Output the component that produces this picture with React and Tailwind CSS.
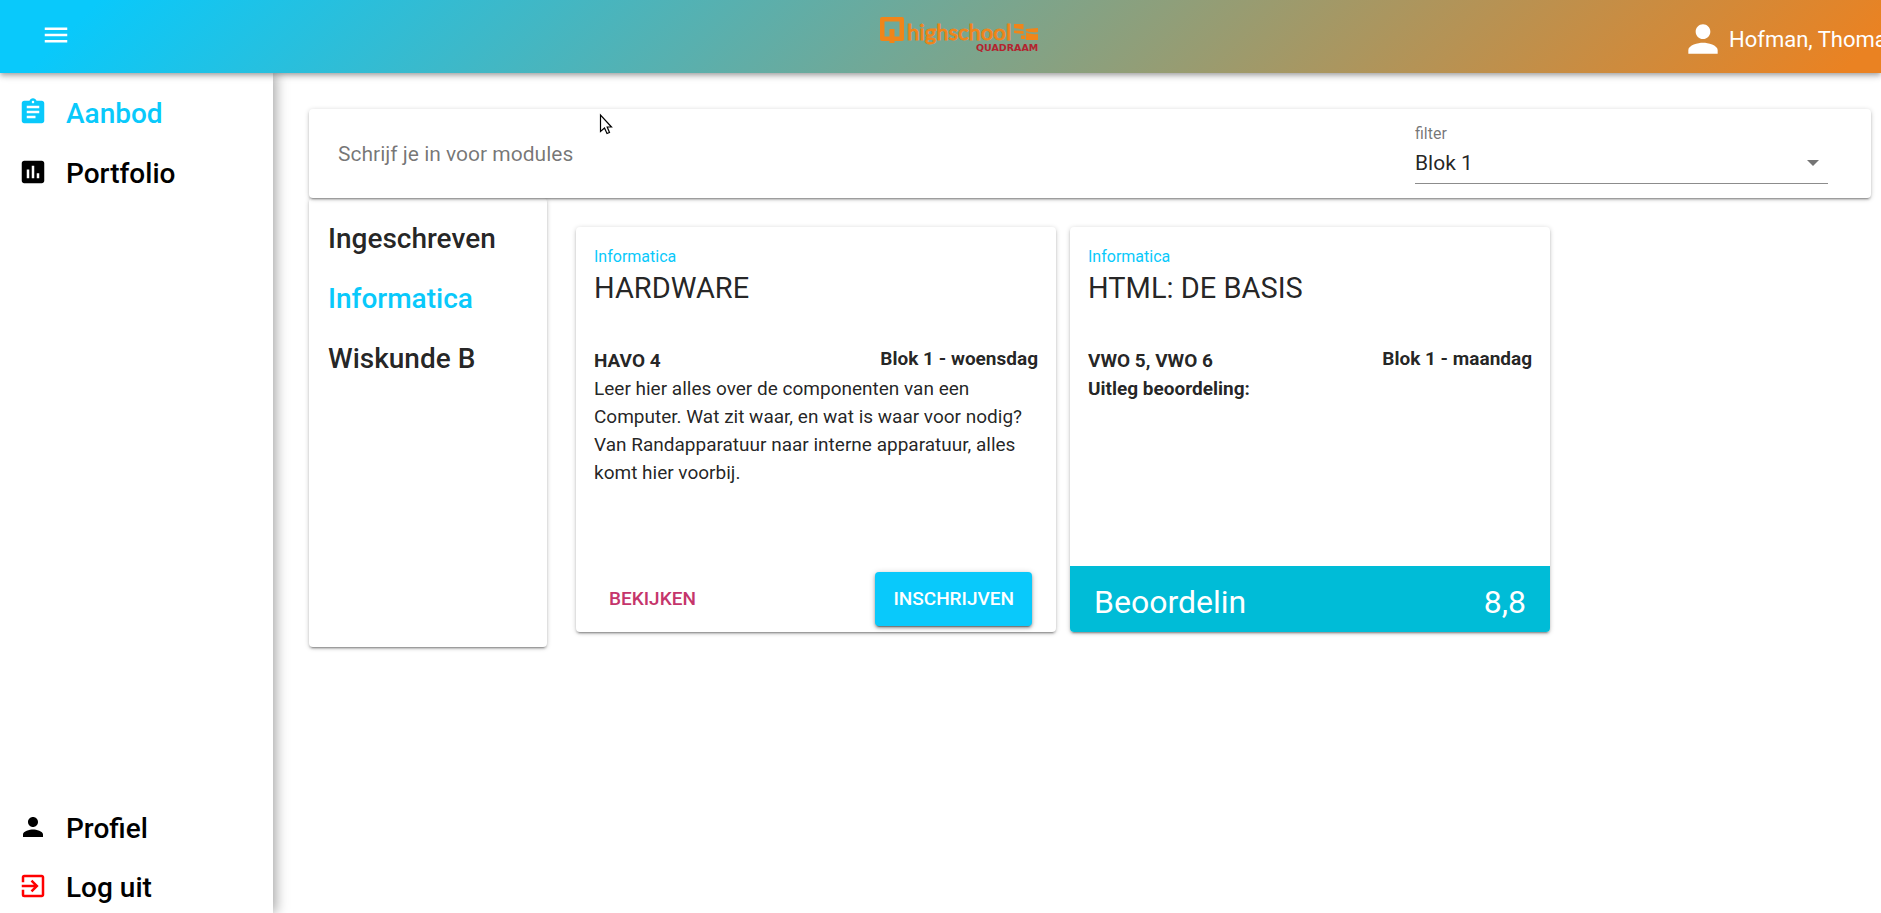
import { useState } from "react";
import {
  MdAssessment,
  MdAssignment,
  MdExitToApp,
  MdMenu,
  MdPerson,
} from "react-icons/md";

const cardShadow =
  "shadow-[0_3px_1px_-2px_rgba(0,0,0,0.2),0_2px_2px_rgba(0,0,0,0.16),0_1px_5px_rgba(0,0,0,0.2)]";
const raisedShadow =
  "shadow-[0_3px_1px_-2px_rgba(0,0,0,0.3),0_2px_3px_rgba(0,0,0,0.3),0_1px_6px_rgba(0,0,0,0.2)]";

const modules = [
  {
    title: "HARDWARE",
    subject: "Informatica",
    level: "HAVO 4",
    slot: "Blok 1 - woensdag",
    text: "Leer hier alles over de componenten van een Computer. Wat zit waar, en wat is waar voor nodig? Van Randapparatuur naar interne apparatuur, alles komt hier voorbij.",
  },
  {
    title: "HTML: DE BASIS",
    subject: "Informatica",
    level: "VWO 5, VWO 6",
    slot: "Blok 1 - maandag",
    grade: "8,8",
  },
];

function Logo() {
  return (
    <svg
      width="160"
      height="38"
      viewBox="0 0 160 38"
      role="img"
      aria-label="Qhighschool Quadraam"
    >
      <path
        fill="#f08519"
        fillRule="evenodd"
        d="M2 0H22Q24 0 24 2V22Q24 24 22 24H14.500V26H9.500V24H2Q0 24 0 22V2Q0 0 2 0ZM4.500 4.500V19.500H9.500V12H14.500V19.500H19.500V4.500Z"
      />
      <text
        x="27"
        y="23"
        fill="#f08519"
        stroke="#f08519"
        strokeWidth="0.8"
        fontFamily="Lato, sans-serif"
        fontWeight="500"
        fontSize="22"
      >
        highschool
      </text>
      <g fill="#f08519">
        <path d="M134 7H143.500V12.500L134 11Z" />
        <path d="M134 13.500L143.500 14V17L134 16Z" />
        <path d="M146 12L158 11V15Q151 16 146 14Z" />
        <path d="M146 15.500Q152 18 158 17V23H146Z" />
        <path d="M141 18.500H145V22H141Z" />
      </g>
      <text
        x="96"
        y="34"
        fill="#b3242f"
        fontFamily="DejaVu Sans, sans-serif"
        fontWeight="700"
        fontSize="9.500"
      >
        QUADRAAM
      </text>
    </svg>
  );
}

function Header() {
  return (
    <header className="relative z-20 flex h-[73px] items-center justify-between overflow-x-clip bg-[linear-gradient(135deg,#09c9fb_5%,#ea8222_98%)] pl-[41px] text-white shadow-[0_2px_4px_-1px_rgba(0,0,0,0.2),0_4px_5px_rgba(0,0,0,0.14),0_1px_10px_rgba(0,0,0,0.12)]">
      <button type="button" aria-label="Menu" className="mb-1 flex-none">
        <MdMenu size={30} />
      </button>
      <a href="#" aria-label="Home" className="absolute left-[880px] top-[17px]">
        <Logo />
      </a>
      <a href="#profiel" className="flex w-[200px] flex-none items-center gap-1 whitespace-nowrap pt-1 text-[22px]">
        <MdPerson size={44} className="flex-none" />
        <span className="pt-0.5">Hofman, Thomas</span>
      </a>
    </header>
  );
}

function NavItem({ icon: Icon, label, color, iconColor }) {
  return (
    <a
      href={"#" + label.toLowerCase().replace(" ", "-")}
      className={"flex h-[50px] items-center gap-[18px] pl-[18px] text-[28px] font-medium " + color}
    >
      <Icon size={30} className={"mb-1 " + iconColor} />
      {label}
    </a>
  );
}

function Sidebar() {
  return (
    <nav className="z-10 flex w-[273px] flex-none flex-col justify-between bg-white pt-4 shadow-[3px_0_12px_rgba(0,0,0,0.35)]">
      <div className="flex flex-col gap-2.5">
        <NavItem icon={MdAssignment} label="Aanbod" color="text-[#09c9fb]" iconColor="" />
        <NavItem icon={MdAssessment} label="Portfolio" color="text-black" iconColor="" />
      </div>
      <div className="flex flex-col gap-[9px]">
        <NavItem icon={MdPerson} label="Profiel" color="text-black" iconColor="" />
        <NavItem icon={MdExitToApp} label="Log uit" color="text-black" iconColor="text-[#ff0000]" />
      </div>
    </nav>
  );
}

function FilterBar() {
  const [block, setBlock] = useState("Blok 1");
  return (
    <section className={"relative z-10 flex items-center justify-between rounded bg-white pb-3.5 pl-[29px] pr-[43px] pt-[15px] " + cardShadow}>
      <h1 className="pt-0.5 text-[21px] text-black/55">Schrijf je in voor modules</h1>
      <div className="flex w-[413px] flex-col">
        <label htmlFor="filter" className="text-[16px] leading-5 text-black/55">
          filter
        </label>
        <div className="relative">
          <select
            id="filter"
            value={block}
            onChange={(e) => setBlock(e.target.value)}
            className="h-10 w-full appearance-none border-b border-black/45 bg-transparent text-[21px] text-black/87 outline-none"
          >
            <option>Blok 1</option>
            <option>Blok 2</option>
            <option>Blok 3</option>
            <option>Blok 4</option>
          </select>
          <svg
            className="pointer-events-none absolute right-[9px] top-4"
            width="12"
            height="6"
            viewBox="0 0 12 6"
            fill="#757575"
          >
            <path d="M0 0H12L6 6Z" />
          </svg>
        </div>
      </div>
    </section>
  );
}

function ModuleCard({ module }) {
  return (
    <article className={"flex min-h-[405px] w-[480px] flex-col rounded bg-white " + cardShadow}>
      <div className="flex flex-1 flex-col px-[18px] pt-[17px]">
        <p className="text-[16px] leading-[26px] text-[#09c9fb]">{module.subject}</p>
        <h2 className="text-[29px] leading-9">{module.title}</h2>
        <div className="mt-[39px] flex items-start justify-between text-[19px] font-bold leading-7">
          <p className="pt-0.5">{module.level}</p>
          <p>{module.slot}</p>
        </div>
        {module.text ? (
          <p className="text-[19px] leading-7">{module.text}</p>
        ) : (
          <p className="text-[19px] font-bold leading-7">Uitleg beoordeling:</p>
        )}
      </div>
      {module.grade ? (
        <div className="flex h-[66px] items-center justify-between rounded-b bg-[#00bcd7] px-6 pt-1.5 text-[32px] text-white">
          <span>Beoordelin</span>
          <span>{module.grade}</span>
        </div>
      ) : (
        <div className="flex items-center justify-between pb-1.5 pl-[18px] pr-6 text-[19px] font-medium">
          <button type="button" className="h-[54px] rounded px-[15px] text-[#c5356b]">
            BEKIJKEN
          </button>
          <button type="button" className={"h-[54px] rounded bg-[#09c9fb] px-[18px] text-white " + raisedShadow}>
            INSCHRIJVEN
          </button>
        </div>
      )}
    </article>
  );
}

function Pointer() {
  return (
    <svg
      className="pointer-events-none absolute left-[599px] top-[113px] z-30"
      width="15"
      height="22"
      viewBox="0 0 15 22"
      aria-hidden="true"
    >
      <path
        d="M1.5 2V18.500L5.500 15L8 20.500L10.500 19.500L8.200 14H12.500Z"
        fill="#fff"
        stroke="#000"
        strokeWidth="1.200"
      />
    </svg>
  );
}

export default function App() {
  return (
    <div className="relative flex min-h-screen flex-col overflow-x-clip bg-white font-[Roboto,sans-serif] text-black/87">
      <Header />
      <div className="flex flex-1">
        <Sidebar />
        <main className="min-w-0 flex-1 pl-9 pr-2.5 pt-9">
          <FilterBar />
          <div className="flex items-start">
            <nav className={"min-h-[449px] w-[238px] flex-none rounded bg-white pl-[19px] pt-[11px] text-[28px] font-medium " + cardShadow}>
              <a href="#ingeschreven" className="flex h-[60px] items-center">Ingeschreven</a>
              <a href="#informatica" className="flex h-[60px] items-center text-[#09c9fb]">Informatica</a>
              <a href="#wiskunde-b" className="flex h-[60px] items-center">Wiskunde B</a>
            </nav>
            <div className="flex flex-wrap gap-3.5 pl-[29px] pt-[29px]">
              {modules.map((m) => (
                <ModuleCard key={m.title} module={m} />
              ))}
            </div>
          </div>
        </main>
      </div>
      <Pointer />
    </div>
  );
}
